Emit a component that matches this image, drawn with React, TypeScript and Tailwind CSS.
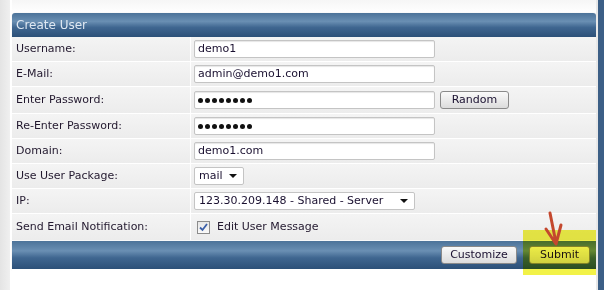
import React from "react";

const font = { fontFamily: '"DejaVu Sans", Verdana, sans-serif' };

const Dots = () => (
  <div className="flex gap-[2px]">
    {Array.from({ length: 8 }).map((_, i) => (
      <div key={i} className="w-[5px] h-[5px] rounded-full bg-[#111]" />
    ))}
  </div>
);

const Input = ({ value, pw = false }: { value: string; pw?: boolean }) => (
  <div className="w-[241px] h-[18px] bg-white border border-[#c4c4c4] rounded-[2px] flex items-center px-[3px] text-[11px] text-[#1a1030] shadow-[inset_0_1px_1px_#e6e6e6]">
    {pw ? <Dots /> : value}
  </div>
);

const Select = ({ value, w }: { value: string; w: string }) => (
  <div
    className={`${w} h-[18px] bg-white border border-[#c4c4c4] rounded-[2px] flex items-center justify-between pl-[4px] pr-[6px] text-[11px] text-[#1a1030]`}
  >
    <span>{value}</span>
    <svg width="8" height="5" viewBox="0 0 8 5">
      <path d="M0 0 L8 0 L4 4 Z" fill="#111" />
    </svg>
  </div>
);

const Btn = ({ children, w }: { children: React.ReactNode; w: string }) => (
  <div
    className={`${w} h-[18px] flex items-center justify-center rounded-[3px] border border-[#8a8a8a] bg-[linear-gradient(#fafafa,#dcdcdc)] text-[11px] text-[#1a1030]`}
  >
    {children}
  </div>
);

const Row = ({ label, h = "h-[25px]", children }: { label: string; h?: string; children: React.ReactNode }) => (
  <div className={`flex ${h} border-b border-white bg-[linear-gradient(#f4f4f4,#ececec)]`}>
    <div className="w-[179px] border-r border-white flex items-center pl-[4px] text-[11px] text-[#22182e]">
      {label}
    </div>
    <div className="flex-1 flex items-center gap-[5px] pl-[3px]">{children}</div>
  </div>
);

const barBg = "bg-[linear-gradient(#4c7399,#6a8fb3_35%,#3f6690_60%,#2c5078)]";

export default function App() {
  return (
    <div className="relative w-[604px] h-[290px] overflow-hidden flex bg-white" style={font}>
      <div className="w-[10px] bg-[linear-gradient(90deg,#e4e4e4,#f0f0f0)]" />
      <div className="w-[2px] bg-white" />
      <div className="flex-1 flex flex-col">
        <div className="h-[13px] bg-[linear-gradient(#f6f6f6,#ffffff)]" />
        <div className={`h-[24px] rounded-t-[3px] ${barBg} flex items-center pl-[4px] text-[12px] text-[#dfe8f2] shadow-[1px_1px_2px_#999]`}>
          Create User
        </div>
        <Row label="Username:">
          <Input value="demo1" />
        </Row>
        <Row label="E-Mail:">
          <Input value="admin@demo1.com" />
        </Row>
        <Row label="Enter Password:" h="h-[27px]">
          <Input value="" pw />
          <Btn w="w-[69px]">Random</Btn>
        </Row>
        <Row label="Re-Enter Password:">
          <Input value="" pw />
        </Row>
        <Row label="Domain:">
          <Input value="demo1.com" />
        </Row>
        <Row label="Use User Package:">
          <Select value="mail" w="w-[50px]" />
        </Row>
        <Row label="IP:">
          <Select value="123.30.209.148 - Shared - Server" w="w-[221px]" />
        </Row>
        <Row label="Send Email Notification:" h="h-[27px]">
          <div className="flex items-center gap-[7px] pl-[3px] text-[11px] text-[#22182e]">
            <div className="w-[13px] h-[13px] border border-[#8c8c8c] bg-[linear-gradient(#e6e6e6,#fafafa)] flex items-center justify-center">
              <svg width="9" height="9" viewBox="0 0 9 9">
                <path d="M1 4.5 L3.5 7 L8 1" stroke="#3b5fa8" strokeWidth="1.8" fill="none" />
              </svg>
            </div>
            Edit User Message
          </div>
        </Row>
        <div className={`h-[28px] ${barBg} flex items-center justify-end gap-[12px] pr-[6px] shadow-[1px_1px_2px_#999]`}>
          <Btn w="w-[76px]">Customize</Btn>
          <Btn w="w-[61px]">Submit</Btn>
        </div>
        <div className="flex-1 bg-white" />
      </div>
      <div className="w-[2px] bg-[#e8e8e8]" />
      <div className="w-[6px] bg-[#3c5f86]" />
      <div className="absolute left-[523px] top-[230px] w-[73px] h-[45px] bg-[#f2f248] mix-blend-multiply pointer-events-none" />
      <svg className="absolute left-[540px] top-[209px]" width="30" height="40" viewBox="0 0 30 40">
        <path d="M10 4 L16 34 M6 20 L16 35 L21 16" stroke="#c4482e" strokeWidth="3" fill="none" strokeLinecap="round" strokeLinejoin="round" />
      </svg>
    </div>
  );
}
